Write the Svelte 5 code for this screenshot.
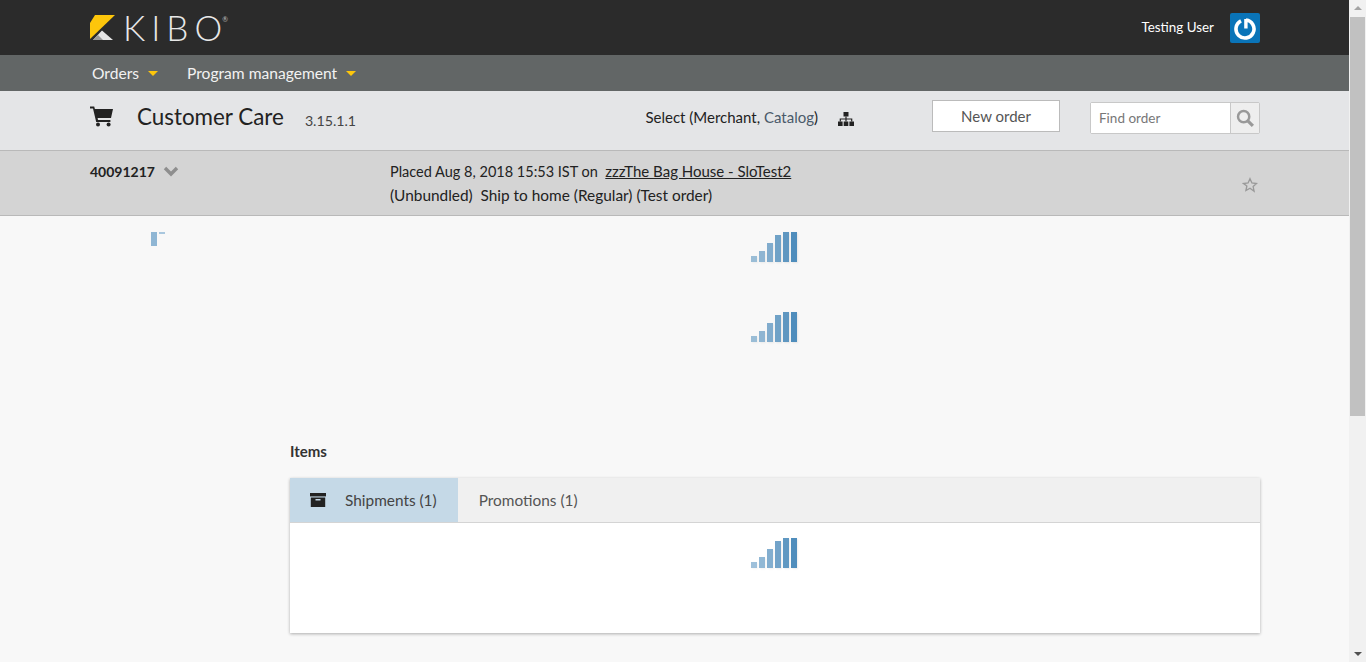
<script>
  const steps = [
    { h: 6, o: 0.55 },
    { h: 11, o: 0.62 },
    { h: 19, o: 0.7 },
    { h: 27, o: 0.8 },
    { h: 30, o: 0.9 },
    { h: 30, o: 1 }
  ];
  const navItems = ['Orders', 'Program management'];
</script>

{#snippet loader()}
  <div class="loader">
    {#each steps as s}
      <span class="bar" style="height:{s.h}px;opacity:{s.o}"></span>
    {/each}
  </div>
{/snippet}

<div class="page">
  <div class="main">
    <header class="topbar">
      <div class="brand">
        <svg class="logo-mark" width="26" height="26" viewBox="0 0 26 26">
          <polygon points="5,0 25,0 0,24 0,8" fill="#fdc60b" />
          <polygon points="3,25 12,15.500 23,25" fill="#e6e6e6" />
          <polygon points="3,25 8,20 13,25" fill="#9a9a9a" />
        </svg>
        <span class="wordmark">KIB<span class="last">O</span></span><span class="reg">®</span>
      </div>
      <div class="user">
        <span class="user-name">Testing User</span>
        <button class="power" aria-label="Log out">
          <svg width="24" height="24" viewBox="0 -1 24 24">
            <path d="M8 3.940a9 9 0 1 0 5-.880" fill="none" stroke="#fff" stroke-width="3.600" />
            <rect x="11.200" y="2" width="3.400" height="9.500" fill="#fff" />
          </svg>
        </button>
      </div>
    </header>

    <nav class="navbar">
      {#each navItems as item}
        <span class="nav-item">{item}<i class="caret"></i></span>
      {/each}
    </nav>

    <section class="subheader">
      <svg class="cart" width="24" height="22" viewBox="0 0 24 22">
        <path d="M0 1.500h4.200l.7 2.600H23l-2 9H7.600l.4 1.900h12.400v2H6.200L3 3.500H0z" fill="#222" />
        <circle cx="8" cy="19.600" r="2" fill="#222" />
        <circle cx="18.600" cy="19.600" r="2" fill="#222" />
      </svg>
      <h1>Customer Care</h1>
      <span class="version">3.15.1.1</span>
      <span class="select">Select (Merchant, <span class="catalog">Catalog</span>)</span>
      <svg class="sitemap" width="16" height="14" viewBox="0 0 16 14">
        <rect x="5.500" y="0" width="5" height="4.500" fill="#222" />
        <rect x="0" y="9.500" width="4.600" height="4.500" fill="#222" />
        <rect x="5.700" y="9.500" width="4.600" height="4.500" fill="#222" />
        <rect x="11.400" y="9.500" width="4.600" height="4.500" fill="#222" />
        <path d="M8 4.500V9.500M2.300 9.500V7H13.700V9.500" fill="none" stroke="#222" stroke-width="1.200" />
      </svg>
      <button class="new-order">New order</button>
      <div class="find">
        <span class="find-input">Find order</span>
        <span class="find-btn">
          <svg width="18" height="18" viewBox="0 0 16 16">
            <circle cx="6.800" cy="6.800" r="5" fill="none" stroke="#999" stroke-width="2.200" />
            <path d="M10.500 10.500L15 15" stroke="#999" stroke-width="2.800" />
          </svg>
        </span>
      </div>
    </section>

    <section class="order-band">
      <div class="order-id">
        <strong>40091217</strong>
        <svg width="16" height="11" viewBox="0 0 16 11">
          <path d="M2 2l6 6 6-6" fill="none" stroke="#8e8e8e" stroke-width="3.400" />
        </svg>
      </div>
      <div class="order-info">
        <p class="placed">Placed Aug 8, 2018 15:53 IST on&nbsp; <u>zzzThe Bag House - SloTest2</u></p>
        <p class="shipping">(Unbundled)&nbsp; Ship to home (Regular) (Test order)</p>
      </div>
      <svg class="star" width="16" height="16" viewBox="0 0 24 24">
        <path d="M12 2.500l2.900 6.400 6.900.8-5.100 4.700 1.400 6.900L12 16.800 5.900 20.300l1.400-6.900L2.200 9.700l6.900-.8z" fill="none" stroke="#999" stroke-width="2" />
      </svg>
    </section>

    <div class="content">
      <aside class="side">
        <div class="mini">
          <span class="mini-a"></span>
          <span class="mini-b"></span>
        </div>
      </aside>
      <div class="details">
        <div class="loader-row">{@render loader()}</div>
        <div class="loader-row second">{@render loader()}</div>
        <h2>Items</h2>
        <div class="card">
          <div class="tabs">
            <div class="tab active">
              <svg width="16" height="14" viewBox="0 0 16 14">
                <rect x="0" y="0" width="16" height="3.400" fill="#222" />
                <path d="M.8 4.400h14.400V14H.8z M5.500 6v1.400h5V6z" fill="#222" fill-rule="evenodd" />
              </svg>
              <span>Shipments (1)</span>
            </div>
            <div class="tab">Promotions (1)</div>
          </div>
          <div class="card-body">{@render loader()}</div>
        </div>
      </div>
    </div>
  </div>

  <div class="scrollbar">
    <span class="arrow up"></span>
    <span class="thumb"></span>
    <span class="arrow down"></span>
  </div>
</div>

<style>
  :global(body) {
    margin: 0;
    background: #f8f8f8;
    font-family: Lato, "Open Sans", sans-serif;
    overflow: hidden;
  }

  .page {
    display: flex;
    height: 662px;
    overflow: hidden;
  }

  .main {
    flex: 1;
    min-width: 0;
    white-space: nowrap;
  }

  .topbar {
    height: 55px;
    background: #2b2b2b;
    display: flex;
    align-items: center;
    justify-content: space-between;
    padding: 0 89px 0 90px;
  }

  .brand {
    display: flex;
    align-items: center;
    color: #e8e8e8;
  }

  .logo-mark {
    margin-right: 7px;
  }

  .wordmark {
    font-size: 35px;
    font-weight: 300;
    letter-spacing: 6px;
    line-height: 40px;
    margin-top: -2px;
  }

  .last {
    letter-spacing: 0;
  }

  .reg {
    font-size: 7px;
    align-self: flex-start;
    margin-top: 6px;
    color: #bbb;
  }

  .user {
    display: flex;
    align-items: center;
    gap: 16px;
  }

  .user-name {
    color: #fff;
    font-size: 13.4px;
    margin-top: -2px;
  }

  .power {
    width: 30px;
    height: 30px;
    padding: 0;
    border: 0;
    border-radius: 2px;
    background: #0a74b8;
    display: flex;
    align-items: center;
    justify-content: center;
  }

  .navbar {
    height: 36px;
    background: #626666;
    display: flex;
    align-items: center;
    gap: 29px;
    padding-left: 92px;
    color: #f2f2f2;
    font-size: 15.6px;
  }

  .nav-item {
    display: flex;
    align-items: center;
  }

  .caret {
    width: 0;
    height: 0;
    margin-left: 9px;
    border-left: 5px solid transparent;
    border-right: 5px solid transparent;
    border-top: 5px solid #fdc60b;
  }

  .subheader {
    height: 59px;
    background: #e4e5e7;
    border-bottom: 1px solid #b9b9b9;
    display: flex;
    align-items: center;
    padding: 0 89px 0 90px;
    color: #222;
  }

  .subheader > * {
    flex: none;
  }

  .cart {
    margin: -9px 23px 0 0;
  }

  h1 {
    margin: -8px 21px 0 0;
    font-size: 22.4px;
    font-weight: 400;
  }

  .version {
    font-size: 14.2px;
    color: #444;
    margin-top: -1px;
  }

  .select {
    font-size: 15px;
    margin: -8px 0 0 auto;
  }

  .catalog {
    color: #4a5a6a;
  }

  .sitemap {
    margin: -4px 78px 0 20px;
  }

  .new-order {
    width: 128px;
    height: 32px;
    background: #fff;
    border: 1px solid #bbb;
    color: #555;
    font-family: inherit;
    font-size: 15px;
    margin-top: -9px;
    padding: 0;
  }

  .find {
    margin-left: 30px;
    display: flex;
    height: 32px;
    width: 170px;
    border: 1px solid #c8c8c8;
    border-radius: 2px;
    box-sizing: border-box;
    margin-top: -6px;
  }

  .find-input {
    flex: 1;
    background: #fff;
    color: #777;
    font-size: 13.5px;
    line-height: 30px;
    padding-left: 8px;
  }

  .find-btn {
    width: 28px;
    border-left: 1px solid #c8c8c8;
    background: #eee;
    display: flex;
    align-items: center;
    justify-content: center;
  }

  .order-band {
    height: 64px;
    background: #d4d4d4;
    border-bottom: 1px solid #b9b9b9;
    display: flex;
    padding: 0 90px;
    color: #222;
  }

  .order-id {
    width: 300px;
    display: flex;
    align-items: center;
    gap: 8px;
    height: 40px;
    font-size: 14px;
  }

  .order-info {
    flex: 1;
    padding-top: 8px;
  }

  .order-info p {
    margin: 0;
    line-height: 24px;
  }

  .placed {
    font-size: 14.5px;
  }

  .placed u {
    font-size: 15px;
  }

  .order-info .shipping {
    font-size: 15.4px;
    margin-top: -1px;
  }

  .star {
    align-self: center;
    margin: 4px 1px 0 0;
  }

  .content {
    display: flex;
    padding: 0 89px 0 90px;
  }

  .side {
    width: 200px;
    flex: none;
  }

  .mini {
    display: flex;
    gap: 2px;
    margin: 16px 0 0 61px;
  }

  .mini-a {
    width: 6px;
    height: 14px;
    background: #8fb6d4;
  }

  .mini-b {
    width: 6px;
    height: 2px;
    background: #a9c7de;
  }

  .details {
    flex: 1;
    min-width: 0;
  }

  .loader-row {
    display: flex;
    justify-content: center;
    padding-top: 16px;
    margin-left: -2px;
  }

  .loader-row.second {
    padding-top: 50px;
  }

  .loader {
    display: flex;
    align-items: flex-end;
    gap: 2px;
    height: 30px;
  }

  .bar {
    width: 6px;
    background: #4f8dbc;
    box-shadow: 1px 1px 2px rgba(0, 0, 0, 0.08);
  }

  h2 {
    margin: 99px 0 17px;
    font-size: 15px;
    line-height: 20px;
    font-weight: 700;
    color: #333;
  }

  .card {
    background: #fff;
    box-shadow: 0 1px 3px rgba(0, 0, 0, 0.3);
  }

  .tabs {
    display: flex;
    height: 44px;
    background: #f0f0f0;
    border-bottom: 1px solid #d4d4d4;
    color: #555;
    font-size: 15.4px;
  }

  .tab {
    display: flex;
    align-items: center;
    padding: 0 21px;
  }

  .tab.active {
    background: #c5d9e7;
    gap: 19px;
    color: #444;
    padding: 0 21px 0 20px;
  }

  .card-body {
    height: 110px;
    box-sizing: border-box;
    padding-top: 15px;
    display: flex;
    justify-content: center;
    margin-left: -2px;
  }

  .scrollbar {
    width: 17px;
    flex: none;
    background: #f1f1f1;
    display: flex;
    flex-direction: column;
    align-items: center;
    position: relative;
  }

  .thumb {
    width: 15px;
    height: 399px;
    background: #c1c1c1;
    margin-top: 17px;
  }

  .arrow {
    position: absolute;
    width: 0;
    height: 0;
    border-left: 4px solid transparent;
    border-right: 4px solid transparent;
  }

  .arrow.up {
    top: 6px;
    border-bottom: 4px solid #a3a3a3;
  }

  .arrow.down {
    bottom: 6px;
    border-top: 4px solid #505050;
  }
</style>
